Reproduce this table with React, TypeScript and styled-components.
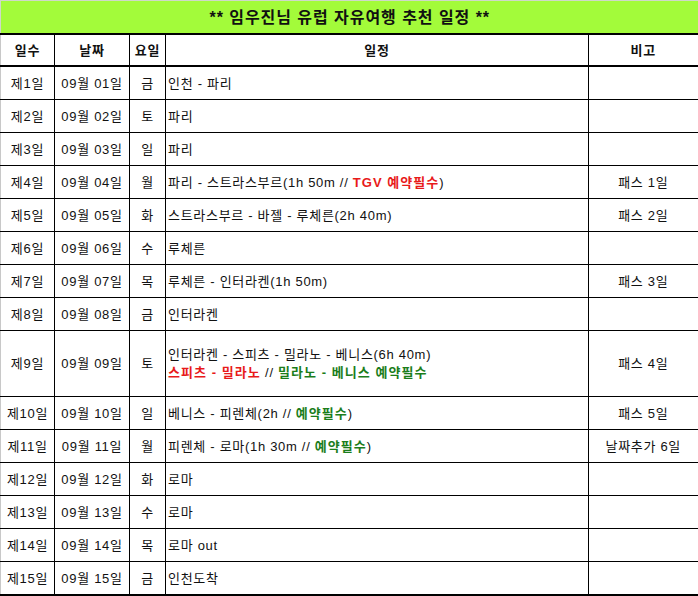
import React from "react";
import styled, { createGlobalStyle } from "styled-components";

const Global = createGlobalStyle`
  html, body { margin: 0; padding: 0; background: #ffffff; }
  body { font-family: "Liberation Sans", "Noto Sans CJK KR", sans-serif; color: #111; }
`;

const Sheet = styled.table`
  width: 698px;
  border-collapse: collapse;
  table-layout: fixed;
  font-size: 13px;
  line-height: 18px;
  letter-spacing: 0.7px;
`;

const TitleCell = styled.td`
  height: 31px;
  padding: 1px 0 0;
  background: #a3fb3a;
  border-top: 1px solid #cfd8c8;
  border-left: 1px solid #cfd8c8;
  text-align: center;
  font-size: 16px;
  font-weight: 700;
  letter-spacing: 0.95px;
`;

const HeadCell = styled.th<{ $last?: boolean; $first?: boolean }>`
  height: 29px;
  padding: 1px 0 0;
  border-top: 2px solid #000;
  border-bottom: 2px solid #000;
  border-left: 1px solid ${(p) => (p.$first ? "#c8c8c8" : "#000")};
  border-right: ${(p) => (p.$last ? "2px" : "1px")} solid #000;
  font-weight: 700;
  text-align: center;
  background: #fff;
`;

const Cell = styled.td<{
  $align?: "left" | "center";
  $first?: boolean;
  $last?: boolean;
  $bottom?: boolean;
  $tall?: boolean;
}>`
  height: ${(p) => (p.$tall ? "64px" : "31px")};
  padding: 1px ${(p) => (p.$align === "left" ? "2px" : "0")} 0;
  text-align: ${(p) => p.$align ?? "center"};
  vertical-align: middle;
  border-top: 1px solid #000;
  border-bottom: ${(p) => (p.$bottom ? "2px" : "1px")} solid #000;
  border-left: 1px solid ${(p) => (p.$first ? "#c8c8c8" : "#000")};
  border-right: ${(p) => (p.$last ? "2px" : "1px")} solid #000;
  white-space: nowrap;
`;

const Red = styled.b`
  color: #e81a1a;
  font-weight: 700;
  letter-spacing: 1.05px;
`;

const Green = styled.b`
  color: #1b7d1b;
  font-weight: 700;
  letter-spacing: 1.05px;
`;

type Row = {
  n: number;
  date: string;
  day: string;
  plan: React.ReactNode;
  note?: string;
  tall?: boolean;
};

const rows: Row[] = [
  { n: 1, date: "09월 01일", day: "금", plan: "인천 - 파리" },
  { n: 2, date: "09월 02일", day: "토", plan: "파리" },
  { n: 3, date: "09월 03일", day: "일", plan: "파리" },
  {
    n: 4,
    date: "09월 04일",
    day: "월",
    plan: (
      <>
        파리 - 스트라스부르(1h 50m // <Red>TGV 예약필수</Red>)
      </>
    ),
    note: "패스 1일",
  },
  { n: 5, date: "09월 05일", day: "화", plan: "스트라스부르 - 바젤 - 루체른(2h 40m)", note: "패스 2일" },
  { n: 6, date: "09월 06일", day: "수", plan: "루체른" },
  { n: 7, date: "09월 07일", day: "목", plan: "루체른 - 인터라켄(1h 50m)", note: "패스 3일" },
  { n: 8, date: "09월 08일", day: "금", plan: "인터라켄" },
  {
    n: 9,
    date: "09월 09일",
    day: "토",
    tall: true,
    plan: (
      <>
        인터라켄 - 스피츠 - 밀라노 - 베니스(6h 40m)
        <br />
        <Red>스피츠 - 밀라노</Red> // <Green>밀라노 - 베니스 예약필수</Green>
      </>
    ),
    note: "패스 4일",
  },
  {
    n: 10,
    date: "09월 10일",
    day: "일",
    plan: (
      <>
        베니스 - 피렌체(2h // <Green>예약필수</Green>)
      </>
    ),
    note: "패스 5일",
  },
  {
    n: 11,
    date: "09월 11일",
    day: "월",
    plan: (
      <>
        피렌체 - 로마(1h 30m // <Green>예약필수</Green>)
      </>
    ),
    note: "날짜추가 6일",
  },
  { n: 12, date: "09월 12일", day: "화", plan: "로마" },
  { n: 13, date: "09월 13일", day: "수", plan: "로마" },
  { n: 14, date: "09월 14일", day: "목", plan: "로마 out" },
  { n: 15, date: "09월 15일", day: "금", plan: "인천도착" },
];

export default function App() {
  return (
    <>
      <Global />
      <Sheet>
        <colgroup>
          <col style={{ width: 54 }} />
          <col style={{ width: 75 }} />
          <col style={{ width: 36 }} />
          <col style={{ width: 423 }} />
          <col style={{ width: 110 }} />
        </colgroup>
        <thead>
          <tr>
            <TitleCell colSpan={5}>** 임우진님 유럽 자유여행 추천 일정 **</TitleCell>
          </tr>
          <tr>
            <HeadCell $first>일수</HeadCell>
            <HeadCell>날짜</HeadCell>
            <HeadCell>요일</HeadCell>
            <HeadCell>일정</HeadCell>
            <HeadCell $last>비고</HeadCell>
          </tr>
        </thead>
        <tbody>
          {rows.map((r, i) => {
            const bottom = i === rows.length - 1;
            return (
              <tr key={r.n}>
                <Cell $first $bottom={bottom} $tall={r.tall}>
                  제{r.n}일
                </Cell>
                <Cell $bottom={bottom} $tall={r.tall}>{r.date}</Cell>
                <Cell $bottom={bottom} $tall={r.tall}>{r.day}</Cell>
                <Cell $align="left" $bottom={bottom} $tall={r.tall}>
                  {r.plan}
                </Cell>
                <Cell $last $bottom={bottom} $tall={r.tall}>
                  {r.note ?? ""}
                </Cell>
              </tr>
            );
          })}
        </tbody>
      </Sheet>
    </>
  );
}
